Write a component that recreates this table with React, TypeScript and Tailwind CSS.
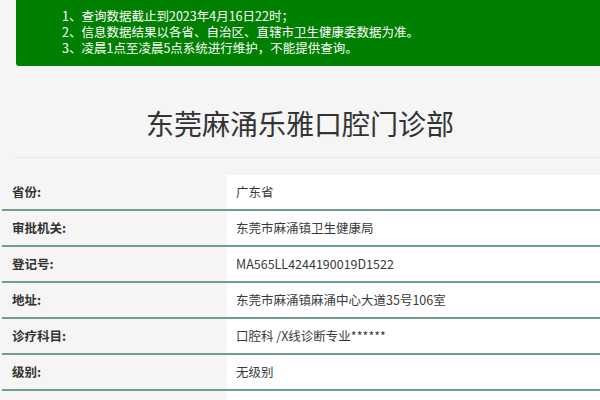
import React from "react";

const rows: [string, string][] = [
  ["省份:", "广东省"],
  ["审批机关:", "东莞市麻涌镇卫生健康局"],
  ["登记号:", "MA565LL4244190019D1522"],
  ["地址:", "东莞市麻涌镇麻涌中心大道35号106室"],
  ["诊疗科目:", "口腔科 /X线诊断专业******"],
  ["级别:", "无级别"],
  ["", ""],
];

export default function App() {
  return (
    <div
      className="w-[600px] h-[400px] overflow-hidden bg-[#f5f5f5] text-[#333]"
      style={{ fontFamily: '"Noto Sans CJK SC", "Noto Sans", sans-serif' }}
    >
      <div className="ml-[16px] h-[66px] bg-[#008000] rounded-bl-[3px] pt-[8px] pl-[46px] text-white text-[12.5px] leading-[16px]">
        <div>1、查询数据截止到2023年4月16日22时；</div>
        <div>2、信息数据结果以各省、自治区、直辖市卫生健康委数据为准。</div>
        <div>3、凌晨1点至凌晨5点系统进行维护，不能提供查询。</div>
      </div>
      <div className="mt-[37px] text-center text-[28px] leading-[40px] text-[#333]">
        东莞麻涌乐雅口腔门诊部
      </div>
      <div className="ml-[15px] mt-[14px] h-px bg-[#e6e6e6]" />
      <div className="mt-[17px] ml-[2px]">
        {rows.map(([k, v], i) => (
          <div key={i} className="flex h-[36px] border-b-[2px] border-[#6f9e8a]">
            <div className="w-[225px] pl-[10px] flex items-center text-[12.5px] font-bold text-[#333]">
              {k}
            </div>
            <div className="flex-1 bg-white pl-[9px] flex items-center text-[12.5px] text-[#3a3a3a]">
              {v}
            </div>
          </div>
        ))}
      </div>
    </div>
  );
}
